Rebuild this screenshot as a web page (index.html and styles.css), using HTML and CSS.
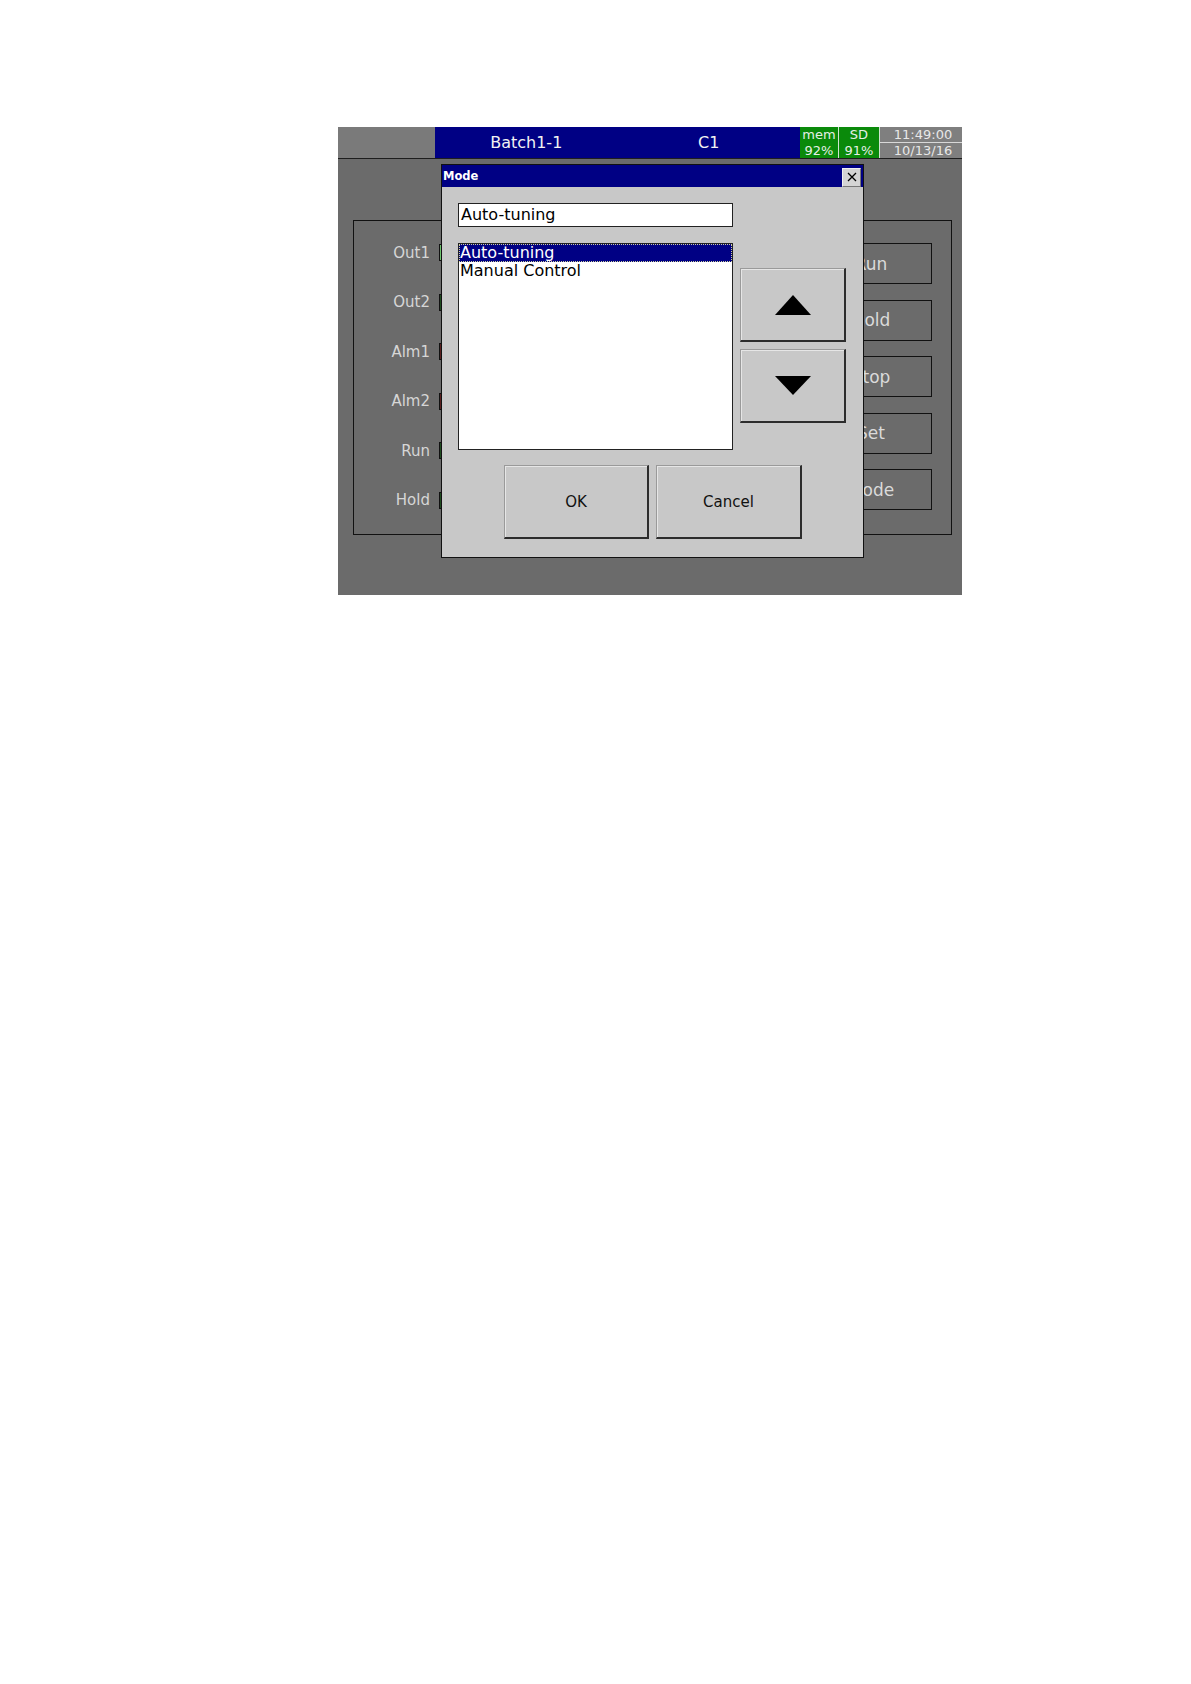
FILE: index.html
```html
<!DOCTYPE html>
<html lang="en">
<head>
    <meta charset="UTF-8">
    <meta name="viewport" content="width=device-width, initial-scale=1.0">
    <title>Mode</title>
    <link rel="stylesheet" href="styles.css">
</head>
<body>

    <div class="screen">

        <div class="status-bar">
            <div class="status-blank"></div>
            <div class="status-title">
                <span>Batch1-1</span>
                <span>C1</span>
            </div>
            <div class="status-meter">
                <span>mem</span>
                <span>92%</span>
            </div>
            <div class="status-meter">
                <span>SD</span>
                <span>91%</span>
            </div>
            <div class="status-clock">
                <span class="clock-time">11:49:00</span>
                <span>10/13/16</span>
            </div>
        </div>

        <div class="panel">
            <ul class="indicators">
                <li><span class="indicator-label">Out1</span><span class="led led-on"></span></li>
                <li><span class="indicator-label">Out2</span><span class="led led-green"></span></li>
                <li><span class="indicator-label">Alm1</span><span class="led led-red"></span></li>
                <li><span class="indicator-label">Alm2</span><span class="led led-red"></span></li>
                <li><span class="indicator-label">Run</span><span class="led led-green"></span></li>
                <li><span class="indicator-label">Hold</span><span class="led led-green"></span></li>
            </ul>
            <div class="actions">
                <button class="action-button">Run</button>
                <button class="action-button">Hold</button>
                <button class="action-button">Stop</button>
                <button class="action-button">Set</button>
                <button class="action-button">Mode</button>
            </div>
        </div>

        <div class="dialog" role="dialog" aria-labelledby="dialogTitle">
            <div class="dialog-titlebar">
                <span id="dialogTitle">Mode</span>
                <button class="dialog-close" aria-label="Close">
                    <svg width="10" height="10" viewBox="0 0 10 10">
                        <path d="M1 1 L9 9 M9 1 L1 9" stroke="#000" stroke-width="1.3" fill="none"/>
                    </svg>
                </button>
            </div>
            <div class="dialog-body">
                <div class="mode-input">Auto-tuning</div>
                <div class="mode-picker">
                    <ul class="mode-list" role="listbox" aria-label="Mode options">
                        <li role="option" class="selected" aria-selected="true">Auto-tuning</li>
                        <li role="option">Manual Control</li>
                    </ul>
                    <div class="scroll-buttons">
                        <button class="panel-button scroll-button" aria-label="Up">
                            <svg width="36" height="20" viewBox="0 0 36 20"><polygon points="18,0 36,20 0,20" fill="#000"/></svg>
                        </button>
                        <button class="panel-button scroll-button" aria-label="Down">
                            <svg width="36" height="20" viewBox="0 0 36 20"><polygon points="0,0 36,0 18,19" fill="#000"/></svg>
                        </button>
                    </div>
                </div>
                <div class="dialog-buttons">
                    <button class="panel-button dialog-button">OK</button>
                    <button class="panel-button dialog-button wide">Cancel</button>
                </div>
            </div>
        </div>

    </div>

</body>
</html>
```

FILE: styles.css
```css
body {
    margin: 0;
    background-color: #fff;
    font-family: "DejaVu Sans", Verdana, sans-serif;
}

.screen {
    position: relative;
    width: 624px;
    height: 468px;
    margin: 127px 0 0 338px;
    background-color: #6b6b6b;
}

/* top status bar */

.status-bar {
    display: flex;
    height: 31px;
    border-bottom: 1px solid #1e1e1e;
    color: #f2f2f2;
}

.status-blank {
    width: 97px;
    background-color: #7a7a7a;
}

.status-title {
    display: flex;
    width: 365px;
    background-color: #000084;
    font-size: 16px;
    line-height: 31px;
}

.status-title span {
    flex: 1;
    text-align: center;
}

.status-meter {
    display: flex;
    flex-direction: column;
    width: 38px;
    background-color: #0a8a0a;
    border-right: 1px solid #cfe3cf;
    font-size: 13px;
    line-height: 15.5px;
    text-align: center;
    color: #e6efe6;
}

.status-meter + .status-meter {
    width: 40px;
}

.status-clock {
    display: flex;
    flex-direction: column;
    width: 82px;
    background-color: #7f7f7f;
    font-size: 13px;
    line-height: 15px;
    text-align: center;
    padding-left: 4px;
    box-sizing: border-box;
    color: #e8e8e8;
}

.clock-time {
    border-bottom: 1px solid #d8d8d8;
    margin-left: -4px;
    padding-left: 4px;
}

/* background panel */

.panel {
    display: flex;
    justify-content: space-between;
    box-sizing: border-box;
    width: 599px;
    height: 315px;
    margin: 61px 0 0 15px;
    border: 1px solid #111;
}

.indicators {
    list-style: none;
    margin: 0;
    padding: 7px 0 0 0;
}

.indicators li {
    display: flex;
    align-items: center;
    gap: 9px;
    height: 49.5px;
}

.indicator-label {
    width: 76px;
    text-align: right;
    font-size: 15px;
    color: #d6d6d6;
}

.led {
    width: 12px;
    height: 17px;
    box-sizing: border-box;
    border: 1px solid #111;
}

.led-on { background-color: #6cc46c; }
.led-green { background-color: #1f4d1f; }
.led-red { background-color: #5c2020; }

.actions {
    display: flex;
    flex-direction: column;
    gap: 15.5px;
    padding-top: 22px;
    margin-right: 19px;
}

.action-button {
    width: 124px;
    height: 41px;
    background-color: #6b6b6b;
    border: 1px solid #111;
    font-family: inherit;
    font-size: 17px;
    color: #dadada;
    padding: 0 0 0 2px;
}

/* dialog */

.dialog {
    position: absolute;
    left: 103px;
    top: 37px;
    width: 423px;
    height: 394px;
    box-sizing: border-box;
    border: 1px solid #111;
    background-color: #c8c8c8;
}

.dialog-titlebar {
    display: flex;
    align-items: center;
    justify-content: space-between;
    height: 22px;
    padding: 0 2px 0 1px;
    background-color: #000084;
    color: #fff;
    font-size: 11.5px;
    font-weight: bold;
}

.dialog-close {
    display: flex;
    align-items: center;
    justify-content: center;
    width: 19px;
    height: 19px;
    margin-top: 2px;
    padding: 0;
    background-color: #d4d4d4;
    border: 1px solid #f0f0f0;
    border-right-color: #777;
    border-bottom-color: #777;
}

.dialog-body {
    padding: 16px 0 0 16px;
}

.mode-input {
    width: 275px;
    height: 24px;
    box-sizing: border-box;
    border: 1px solid #222;
    background-color: #fff;
    padding-left: 2px;
    font-size: 16px;
    line-height: 22px;
}

.mode-picker {
    display: flex;
    margin-top: 16px;
}

.mode-list {
    list-style: none;
    margin: 0;
    padding: 0;
    width: 275px;
    height: 207px;
    box-sizing: border-box;
    border: 1px solid #222;
    background-color: #fff;
    font-size: 16px;
}

.mode-list li {
    height: 18px;
    line-height: 18px;
    padding-left: 1px;
}

.mode-list li.selected {
    background-color: #000084;
    color: #fff;
    outline: 1px dotted #d0d0a0;
    outline-offset: -1px;
}

.scroll-buttons {
    display: flex;
    flex-direction: column;
    gap: 7px;
    margin-left: 7px;
    padding-top: 25px;
}

.panel-button {
    display: flex;
    align-items: center;
    justify-content: center;
    box-sizing: border-box;
    padding: 0;
    background-color: #c8c8c8;
    border: 1px solid #9a9a9a;
    border-right: 2px solid #2c2c2c;
    border-bottom: 2px solid #2c2c2c;
    box-shadow: inset 1px 1px 0 #e6e6e6;
    font-family: inherit;
    font-size: 15px;
    color: #111;
}

.scroll-button {
    width: 106px;
    height: 74px;
}

.dialog-buttons {
    display: flex;
    gap: 7px;
    margin: 15px 0 0 46px;
}

.dialog-button {
    width: 145px;
    height: 74px;
}

.dialog-button.wide {
    width: 146px;
}
```
